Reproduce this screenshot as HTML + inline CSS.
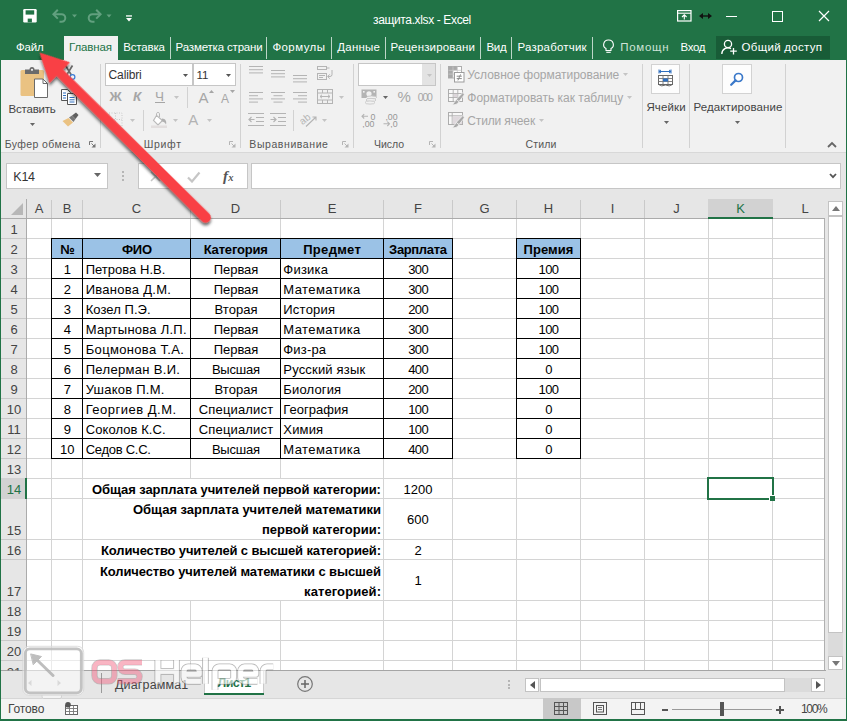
<!DOCTYPE html>
<html><head><meta charset="utf-8"><title>Excel</title>
<style>
html,body{margin:0;padding:0}
body{width:847px;height:721px;overflow:hidden;position:relative;background:#217346;font-family:"Liberation Sans", sans-serif;}
div,span,svg{position:absolute;}
span{white-space:pre;}
</style></head><body>
<div style="left:1px;top:60px;width:844.6px;height:92px;background:#f1f1f1;"></div>
<div style="left:1px;top:152px;width:844.6px;height:1px;background:#d8d8d8;"></div>
<div style="left:1px;top:153px;width:844.6px;height:46px;background:#e6e6e6;"></div>
<div style="left:1px;top:199px;width:844.6px;height:20px;background:#e6e6e6;"></div>
<div style="left:1px;top:219px;width:844.6px;height:452px;background:#e6e6e6;"></div>
<div style="left:1px;top:671px;width:844.6px;height:27px;background:#e6e6e6;"></div>
<div style="left:1px;top:698px;width:844.6px;height:21px;background:#f3f3f3;"></div>
<div style="left:1px;top:698px;width:844.6px;height:1px;background:#d6d6d6;"></div>
<div style="left:27px;top:219px;width:798px;height:452px;background:#fff;"></div>
<div style="left:51px;top:219px;width:1px;height:452px;background:#d4d4d4;"></div>
<div style="left:82px;top:219px;width:1px;height:452px;background:#d4d4d4;"></div>
<div style="left:190px;top:219px;width:1px;height:452px;background:#d4d4d4;"></div>
<div style="left:280px;top:219px;width:1px;height:452px;background:#d4d4d4;"></div>
<div style="left:383px;top:219px;width:1px;height:452px;background:#d4d4d4;"></div>
<div style="left:452px;top:219px;width:1px;height:452px;background:#d4d4d4;"></div>
<div style="left:516px;top:219px;width:1px;height:452px;background:#d4d4d4;"></div>
<div style="left:580px;top:219px;width:1px;height:452px;background:#d4d4d4;"></div>
<div style="left:644px;top:219px;width:1px;height:452px;background:#d4d4d4;"></div>
<div style="left:708px;top:219px;width:1px;height:452px;background:#d4d4d4;"></div>
<div style="left:772px;top:219px;width:1px;height:452px;background:#d4d4d4;"></div>
<div style="left:824px;top:219px;width:1px;height:452px;background:#d4d4d4;"></div>
<div style="left:27px;top:238px;width:798px;height:1px;background:#d4d4d4;"></div>
<div style="left:27px;top:258px;width:798px;height:1px;background:#d4d4d4;"></div>
<div style="left:27px;top:278px;width:798px;height:1px;background:#d4d4d4;"></div>
<div style="left:27px;top:298px;width:798px;height:1px;background:#d4d4d4;"></div>
<div style="left:27px;top:318px;width:798px;height:1px;background:#d4d4d4;"></div>
<div style="left:27px;top:338px;width:798px;height:1px;background:#d4d4d4;"></div>
<div style="left:27px;top:358px;width:798px;height:1px;background:#d4d4d4;"></div>
<div style="left:27px;top:378px;width:798px;height:1px;background:#d4d4d4;"></div>
<div style="left:27px;top:398px;width:798px;height:1px;background:#d4d4d4;"></div>
<div style="left:27px;top:418px;width:798px;height:1px;background:#d4d4d4;"></div>
<div style="left:27px;top:438px;width:798px;height:1px;background:#d4d4d4;"></div>
<div style="left:27px;top:458px;width:798px;height:1px;background:#d4d4d4;"></div>
<div style="left:27px;top:478px;width:798px;height:1px;background:#d4d4d4;"></div>
<div style="left:27px;top:498px;width:798px;height:1px;background:#d4d4d4;"></div>
<div style="left:27px;top:539px;width:798px;height:1px;background:#d4d4d4;"></div>
<div style="left:27px;top:559px;width:798px;height:1px;background:#d4d4d4;"></div>
<div style="left:27px;top:600px;width:798px;height:1px;background:#d4d4d4;"></div>
<div style="left:27px;top:620px;width:798px;height:1px;background:#d4d4d4;"></div>
<div style="left:27px;top:640px;width:798px;height:1px;background:#d4d4d4;"></div>
<div style="left:27px;top:660px;width:798px;height:1px;background:#d4d4d4;"></div>
<div style="left:1px;top:219px;width:25px;height:452px;background:#e6e6e6;"></div>
<div style="left:26px;top:199px;width:1px;height:472px;background:#ababab;"></div>
<div style="left:1px;top:218px;width:824px;height:1px;background:#ababab;"></div>
<div style="left:1px;top:238px;width:25px;height:1px;background:#c9c9c9;"></div>
<div style="left:1px;top:258px;width:25px;height:1px;background:#c9c9c9;"></div>
<div style="left:1px;top:278px;width:25px;height:1px;background:#c9c9c9;"></div>
<div style="left:1px;top:298px;width:25px;height:1px;background:#c9c9c9;"></div>
<div style="left:1px;top:318px;width:25px;height:1px;background:#c9c9c9;"></div>
<div style="left:1px;top:338px;width:25px;height:1px;background:#c9c9c9;"></div>
<div style="left:1px;top:358px;width:25px;height:1px;background:#c9c9c9;"></div>
<div style="left:1px;top:378px;width:25px;height:1px;background:#c9c9c9;"></div>
<div style="left:1px;top:398px;width:25px;height:1px;background:#c9c9c9;"></div>
<div style="left:1px;top:418px;width:25px;height:1px;background:#c9c9c9;"></div>
<div style="left:1px;top:438px;width:25px;height:1px;background:#c9c9c9;"></div>
<div style="left:1px;top:458px;width:25px;height:1px;background:#c9c9c9;"></div>
<div style="left:1px;top:478px;width:25px;height:1px;background:#c9c9c9;"></div>
<div style="left:1px;top:498px;width:25px;height:1px;background:#c9c9c9;"></div>
<div style="left:1px;top:539px;width:25px;height:1px;background:#c9c9c9;"></div>
<div style="left:1px;top:559px;width:25px;height:1px;background:#c9c9c9;"></div>
<div style="left:1px;top:600px;width:25px;height:1px;background:#c9c9c9;"></div>
<div style="left:1px;top:620px;width:25px;height:1px;background:#c9c9c9;"></div>
<div style="left:1px;top:640px;width:25px;height:1px;background:#c9c9c9;"></div>
<div style="left:1px;top:660px;width:25px;height:1px;background:#c9c9c9;"></div>
<div style="left:51px;top:200px;width:1px;height:18px;background:#c9c9c9;"></div>
<div style="left:82px;top:200px;width:1px;height:18px;background:#c9c9c9;"></div>
<div style="left:190px;top:200px;width:1px;height:18px;background:#c9c9c9;"></div>
<div style="left:280px;top:200px;width:1px;height:18px;background:#c9c9c9;"></div>
<div style="left:383px;top:200px;width:1px;height:18px;background:#c9c9c9;"></div>
<div style="left:452px;top:200px;width:1px;height:18px;background:#c9c9c9;"></div>
<div style="left:516px;top:200px;width:1px;height:18px;background:#c9c9c9;"></div>
<div style="left:580px;top:200px;width:1px;height:18px;background:#c9c9c9;"></div>
<div style="left:644px;top:200px;width:1px;height:18px;background:#c9c9c9;"></div>
<div style="left:708px;top:200px;width:1px;height:18px;background:#c9c9c9;"></div>
<div style="left:772px;top:200px;width:1px;height:18px;background:#c9c9c9;"></div>
<div style="left:824px;top:219px;width:1px;height:452px;background:#b0b0b0;"></div>
<div style="left:1px;top:670px;width:825px;height:1px;background:#a5a5a5;"></div>
<div style="left:708px;top:199px;width:65px;height:19px;background:#d2d2d2;"></div>
<div style="left:708px;top:217px;width:65px;height:2px;background:#217346;"></div>
<div style="left:1px;top:478px;width:25px;height:21px;background:#d2d2d2;"></div>
<div style="left:25px;top:478px;width:2px;height:21px;background:#217346;"></div>
<span style="left:34.7px;top:200.0px;font-size:13px;line-height:18px;color:#444;">A</span>
<span style="left:62.7px;top:200.0px;font-size:13px;line-height:18px;color:#444;">B</span>
<span style="left:131.8px;top:200.0px;font-size:13px;line-height:18px;color:#444;">C</span>
<span style="left:230.8px;top:200.0px;font-size:13px;line-height:18px;color:#444;">D</span>
<span style="left:327.7px;top:200.0px;font-size:13px;line-height:18px;color:#444;">E</span>
<span style="left:414.0px;top:200.0px;font-size:13px;line-height:18px;color:#444;">F</span>
<span style="left:479.4px;top:200.0px;font-size:13px;line-height:18px;color:#444;">G</span>
<span style="left:543.8px;top:200.0px;font-size:13px;line-height:18px;color:#444;">H</span>
<span style="left:610.7px;top:200.0px;font-size:13px;line-height:18px;color:#444;">I</span>
<span style="left:673.2px;top:200.0px;font-size:13px;line-height:18px;color:#444;">J</span>
<span style="left:736.2px;top:200.0px;font-size:13px;line-height:18px;color:#217346;">K</span>
<span style="left:801.4px;top:200.0px;font-size:13px;line-height:18px;color:#444;">L</span>
<svg style="left:11px;top:203px;" width="12" height="12" viewBox="0 0 12 12"><path d="M12 0 L12 12 L0 12 Z" fill="#b7b7b7"/></svg>
<span style="left:10.4px;top:220.5px;font-size:13px;line-height:18px;color:#444;">1</span>
<span style="left:10.4px;top:240.5px;font-size:13px;line-height:18px;color:#444;">2</span>
<span style="left:10.4px;top:260.5px;font-size:13px;line-height:18px;color:#444;">3</span>
<span style="left:10.4px;top:280.5px;font-size:13px;line-height:18px;color:#444;">4</span>
<span style="left:10.4px;top:300.5px;font-size:13px;line-height:18px;color:#444;">5</span>
<span style="left:10.4px;top:320.5px;font-size:13px;line-height:18px;color:#444;">6</span>
<span style="left:10.4px;top:340.5px;font-size:13px;line-height:18px;color:#444;">7</span>
<span style="left:10.4px;top:360.5px;font-size:13px;line-height:18px;color:#444;">8</span>
<span style="left:10.4px;top:380.5px;font-size:13px;line-height:18px;color:#444;">9</span>
<span style="left:6.8px;top:400.5px;font-size:13px;line-height:18px;color:#444;">10</span>
<span style="left:7.2px;top:420.5px;font-size:13px;line-height:18px;color:#444;">11</span>
<span style="left:6.8px;top:440.5px;font-size:13px;line-height:18px;color:#444;">12</span>
<span style="left:6.8px;top:460.5px;font-size:13px;line-height:18px;color:#444;">13</span>
<span style="left:6.8px;top:480.5px;font-size:13px;line-height:18px;color:#217346;">14</span>
<span style="left:6.8px;top:521.5px;font-size:13px;line-height:18px;color:#444;">15</span>
<span style="left:6.8px;top:541.5px;font-size:13px;line-height:18px;color:#444;">16</span>
<span style="left:6.8px;top:582.5px;font-size:13px;line-height:18px;color:#444;">17</span>
<span style="left:6.8px;top:602.5px;font-size:13px;line-height:18px;color:#444;">18</span>
<span style="left:6.8px;top:622.5px;font-size:13px;line-height:18px;color:#444;">19</span>
<span style="left:6.8px;top:642.5px;font-size:13px;line-height:18px;color:#444;">20</span>
<span style="left:6.8px;top:663.5px;font-size:13px;line-height:18px;color:#444;clip-path:inset(0 0 11px 0);">21</span>
<div style="left:52px;top:239px;width:401px;height:19px;background:#9bc2e6;"></div>
<div style="left:517px;top:239px;width:64px;height:19px;background:#9bc2e6;"></div>
<div style="left:51px;top:238px;width:402px;height:1px;background:#000;"></div>
<div style="left:516px;top:238px;width:65px;height:1px;background:#000;"></div>
<div style="left:51px;top:258px;width:402px;height:1px;background:#000;"></div>
<div style="left:516px;top:258px;width:65px;height:1px;background:#000;"></div>
<div style="left:51px;top:278px;width:402px;height:1px;background:#000;"></div>
<div style="left:516px;top:278px;width:65px;height:1px;background:#000;"></div>
<div style="left:51px;top:298px;width:402px;height:1px;background:#000;"></div>
<div style="left:516px;top:298px;width:65px;height:1px;background:#000;"></div>
<div style="left:51px;top:318px;width:402px;height:1px;background:#000;"></div>
<div style="left:516px;top:318px;width:65px;height:1px;background:#000;"></div>
<div style="left:51px;top:338px;width:402px;height:1px;background:#000;"></div>
<div style="left:516px;top:338px;width:65px;height:1px;background:#000;"></div>
<div style="left:51px;top:358px;width:402px;height:1px;background:#000;"></div>
<div style="left:516px;top:358px;width:65px;height:1px;background:#000;"></div>
<div style="left:51px;top:378px;width:402px;height:1px;background:#000;"></div>
<div style="left:516px;top:378px;width:65px;height:1px;background:#000;"></div>
<div style="left:51px;top:398px;width:402px;height:1px;background:#000;"></div>
<div style="left:516px;top:398px;width:65px;height:1px;background:#000;"></div>
<div style="left:51px;top:418px;width:402px;height:1px;background:#000;"></div>
<div style="left:516px;top:418px;width:65px;height:1px;background:#000;"></div>
<div style="left:51px;top:438px;width:402px;height:1px;background:#000;"></div>
<div style="left:516px;top:438px;width:65px;height:1px;background:#000;"></div>
<div style="left:51px;top:458px;width:402px;height:1px;background:#000;"></div>
<div style="left:516px;top:458px;width:65px;height:1px;background:#000;"></div>
<div style="left:51px;top:238px;width:1px;height:221px;background:#000;"></div>
<div style="left:82px;top:238px;width:1px;height:221px;background:#000;"></div>
<div style="left:190px;top:238px;width:1px;height:221px;background:#000;"></div>
<div style="left:280px;top:238px;width:1px;height:221px;background:#000;"></div>
<div style="left:383px;top:238px;width:1px;height:221px;background:#000;"></div>
<div style="left:452px;top:238px;width:1px;height:221px;background:#000;"></div>
<div style="left:516px;top:238px;width:1px;height:221px;background:#000;"></div>
<div style="left:580px;top:238px;width:1px;height:221px;background:#000;"></div>
<span style="left:60.2px;top:241.0px;font-size:13px;line-height:18px;color:#000;font-weight:700;letter-spacing:0.3px;">№</span>
<span style="left:121.9px;top:241.0px;font-size:13px;line-height:18px;color:#000;font-weight:700;letter-spacing:-0.19px;">ФИО</span>
<span style="left:203.7px;top:241.0px;font-size:13px;line-height:18px;color:#000;font-weight:700;letter-spacing:-0.17px;">Категория</span>
<span style="left:303.2px;top:241.0px;font-size:13px;line-height:18px;color:#000;font-weight:700;letter-spacing:0.31px;">Предмет</span>
<span style="left:389.1px;top:241.0px;font-size:13px;line-height:18px;color:#000;font-weight:700;letter-spacing:-0.35px;">Зарплата</span>
<span style="left:523.5px;top:241.0px;font-size:13px;line-height:18px;color:#000;font-weight:700;letter-spacing:0.08px;">Премия</span>
<span style="left:63.7px;top:261.0px;font-size:13px;line-height:18px;color:#000;">1</span>
<span style="left:85.7px;top:261.0px;font-size:13px;line-height:18px;color:#000;letter-spacing:0.02px;">Петрова Н.В.</span>
<span style="left:213.8px;top:261.0px;font-size:13px;line-height:18px;color:#000;letter-spacing:-0.07px;">Первая</span>
<span style="left:283.3px;top:261.0px;font-size:13px;line-height:18px;color:#000;letter-spacing:0.24px;">Физика</span>
<span style="left:408.2px;top:261.0px;font-size:13px;line-height:18px;color:#000;letter-spacing:-0.61px;">300</span>
<span style="left:538.6px;top:261.0px;font-size:13px;line-height:18px;color:#000;letter-spacing:-0.61px;">100</span>
<span style="left:63.7px;top:281.0px;font-size:13px;line-height:18px;color:#000;">2</span>
<span style="left:85.7px;top:281.0px;font-size:13px;line-height:18px;color:#000;letter-spacing:0.28px;">Иванова Д.М.</span>
<span style="left:213.8px;top:281.0px;font-size:13px;line-height:18px;color:#000;letter-spacing:-0.07px;">Первая</span>
<span style="left:283.3px;top:281.0px;font-size:13px;line-height:18px;color:#000;letter-spacing:0.42px;">Математика</span>
<span style="left:408.2px;top:281.0px;font-size:13px;line-height:18px;color:#000;letter-spacing:-0.61px;">300</span>
<span style="left:538.6px;top:281.0px;font-size:13px;line-height:18px;color:#000;letter-spacing:-0.61px;">100</span>
<span style="left:63.7px;top:301.0px;font-size:13px;line-height:18px;color:#000;">3</span>
<span style="left:85.7px;top:301.0px;font-size:13px;line-height:18px;color:#000;letter-spacing:0.06px;">Козел П.Э.</span>
<span style="left:214.5px;top:301.0px;font-size:13px;line-height:18px;color:#000;letter-spacing:0.05px;">Вторая</span>
<span style="left:283.3px;top:301.0px;font-size:13px;line-height:18px;color:#000;letter-spacing:0.23px;">История</span>
<span style="left:408.2px;top:301.0px;font-size:13px;line-height:18px;color:#000;letter-spacing:-0.61px;">200</span>
<span style="left:538.6px;top:301.0px;font-size:13px;line-height:18px;color:#000;letter-spacing:-0.61px;">100</span>
<span style="left:63.7px;top:321.0px;font-size:13px;line-height:18px;color:#000;">4</span>
<span style="left:85.7px;top:321.0px;font-size:13px;line-height:18px;color:#000;letter-spacing:0.25px;">Мартынова Л.П.</span>
<span style="left:213.8px;top:321.0px;font-size:13px;line-height:18px;color:#000;letter-spacing:-0.07px;">Первая</span>
<span style="left:283.3px;top:321.0px;font-size:13px;line-height:18px;color:#000;letter-spacing:0.42px;">Математика</span>
<span style="left:408.2px;top:321.0px;font-size:13px;line-height:18px;color:#000;letter-spacing:-0.61px;">300</span>
<span style="left:538.6px;top:321.0px;font-size:13px;line-height:18px;color:#000;letter-spacing:-0.61px;">100</span>
<span style="left:63.7px;top:341.0px;font-size:13px;line-height:18px;color:#000;">5</span>
<span style="left:85.7px;top:341.0px;font-size:13px;line-height:18px;color:#000;letter-spacing:0.34px;">Боцмонова Т.А.</span>
<span style="left:213.8px;top:341.0px;font-size:13px;line-height:18px;color:#000;letter-spacing:-0.07px;">Первая</span>
<span style="left:283.3px;top:341.0px;font-size:13px;line-height:18px;color:#000;letter-spacing:0.18px;">Физ-ра</span>
<span style="left:408.2px;top:341.0px;font-size:13px;line-height:18px;color:#000;letter-spacing:-0.61px;">300</span>
<span style="left:538.6px;top:341.0px;font-size:13px;line-height:18px;color:#000;letter-spacing:-0.61px;">100</span>
<span style="left:63.7px;top:361.0px;font-size:13px;line-height:18px;color:#000;">6</span>
<span style="left:85.7px;top:361.0px;font-size:13px;line-height:18px;color:#000;letter-spacing:0.32px;">Пелерман В.И.</span>
<span style="left:211.9px;top:361.0px;font-size:13px;line-height:18px;color:#000;letter-spacing:-0.2px;">Высшая</span>
<span style="left:283.3px;top:361.0px;font-size:13px;line-height:18px;color:#000;letter-spacing:0.18px;">Русский язык</span>
<span style="left:408.2px;top:361.0px;font-size:13px;line-height:18px;color:#000;letter-spacing:-0.61px;">400</span>
<span style="left:545.2px;top:361.0px;font-size:13px;line-height:18px;color:#000;letter-spacing:-0.61px;">0</span>
<span style="left:63.7px;top:381.0px;font-size:13px;line-height:18px;color:#000;">7</span>
<span style="left:85.7px;top:381.0px;font-size:13px;line-height:18px;color:#000;letter-spacing:0.24px;">Ушаков П.М.</span>
<span style="left:214.5px;top:381.0px;font-size:13px;line-height:18px;color:#000;letter-spacing:0.05px;">Вторая</span>
<span style="left:283.3px;top:381.0px;font-size:13px;line-height:18px;color:#000;letter-spacing:0.16px;">Биология</span>
<span style="left:408.2px;top:381.0px;font-size:13px;line-height:18px;color:#000;letter-spacing:-0.61px;">200</span>
<span style="left:538.6px;top:381.0px;font-size:13px;line-height:18px;color:#000;letter-spacing:-0.61px;">100</span>
<span style="left:63.7px;top:401.0px;font-size:13px;line-height:18px;color:#000;">8</span>
<span style="left:85.7px;top:401.0px;font-size:13px;line-height:18px;color:#000;letter-spacing:0.5px;">Георгиев Д.М.</span>
<span style="left:198.8px;top:401.0px;font-size:13px;line-height:18px;color:#000;letter-spacing:0.16px;">Специалист</span>
<span style="left:283.3px;top:401.0px;font-size:13px;line-height:18px;color:#000;letter-spacing:0.02px;">География</span>
<span style="left:408.2px;top:401.0px;font-size:13px;line-height:18px;color:#000;letter-spacing:-0.61px;">100</span>
<span style="left:545.2px;top:401.0px;font-size:13px;line-height:18px;color:#000;letter-spacing:-0.61px;">0</span>
<span style="left:63.7px;top:421.0px;font-size:13px;line-height:18px;color:#000;">9</span>
<span style="left:85.7px;top:421.0px;font-size:13px;line-height:18px;color:#000;letter-spacing:0.08px;">Соколов К.С.</span>
<span style="left:198.8px;top:421.0px;font-size:13px;line-height:18px;color:#000;letter-spacing:0.16px;">Специалист</span>
<span style="left:283.3px;top:421.0px;font-size:13px;line-height:18px;color:#000;letter-spacing:0.17px;">Химия</span>
<span style="left:408.2px;top:421.0px;font-size:13px;line-height:18px;color:#000;letter-spacing:-0.61px;">100</span>
<span style="left:545.2px;top:421.0px;font-size:13px;line-height:18px;color:#000;letter-spacing:-0.61px;">0</span>
<span style="left:60.1px;top:441.0px;font-size:13px;line-height:18px;color:#000;">10</span>
<span style="left:85.7px;top:441.0px;font-size:13px;line-height:18px;color:#000;letter-spacing:-0.27px;">Седов С.С.</span>
<span style="left:211.9px;top:441.0px;font-size:13px;line-height:18px;color:#000;letter-spacing:-0.2px;">Высшая</span>
<span style="left:283.3px;top:441.0px;font-size:13px;line-height:18px;color:#000;letter-spacing:0.42px;">Математика</span>
<span style="left:408.2px;top:441.0px;font-size:13px;line-height:18px;color:#000;letter-spacing:-0.61px;">400</span>
<span style="left:545.2px;top:441.0px;font-size:13px;line-height:18px;color:#000;letter-spacing:-0.61px;">0</span>
<div style="left:190px;top:479px;width:1px;height:19px;background:#fff;"></div>
<div style="left:280px;top:479px;width:1px;height:19px;background:#fff;"></div>
<div style="left:190px;top:499px;width:1px;height:40px;background:#fff;"></div>
<div style="left:280px;top:499px;width:1px;height:40px;background:#fff;"></div>
<div style="left:190px;top:540px;width:1px;height:19px;background:#fff;"></div>
<div style="left:280px;top:540px;width:1px;height:19px;background:#fff;"></div>
<div style="left:190px;top:560px;width:1px;height:40px;background:#fff;"></div>
<div style="left:280px;top:560px;width:1px;height:40px;background:#fff;"></div>
<span style="left:92.0px;top:480.8px;font-size:13px;line-height:18px;color:#000;font-weight:700;letter-spacing:-0.08px;">Общая зарплата учителей первой категории:</span>
<span style="left:133.0px;top:500.5px;font-size:13px;line-height:18px;color:#000;font-weight:700;letter-spacing:-0.02px;">Общая зарплата учителей математики</span>
<span style="left:262.0px;top:521.0px;font-size:13px;line-height:18px;color:#000;font-weight:700;letter-spacing:-0.01px;">первой категории:</span>
<span style="left:101.0px;top:541.5px;font-size:13px;line-height:18px;color:#000;font-weight:700;letter-spacing:-0.14px;">Количество учителей с высшей категорией:</span>
<span style="left:100.0px;top:563.0px;font-size:13px;line-height:18px;color:#000;font-weight:700;letter-spacing:-0.11px;">Количество учителей математики с высшей</span>
<span style="left:304.1px;top:582.5px;font-size:13px;line-height:18px;color:#000;font-weight:700;letter-spacing:0.09px;">категорией:</span>
<span style="left:403.5px;top:480.8px;font-size:13px;line-height:18px;color:#000;">1200</span>
<span style="left:407.1px;top:510.8px;font-size:13px;line-height:18px;color:#000;">600</span>
<span style="left:414.4px;top:541.5px;font-size:13px;line-height:18px;color:#000;">2</span>
<span style="left:414.4px;top:571.8px;font-size:13px;line-height:18px;color:#000;">1</span>
<div style="left:707px;top:477px;width:67px;height:23px;border:2px solid #217346;box-sizing:border-box;"></div>
<div style="left:769px;top:495px;width:6px;height:6px;background:#fff;"></div>
<div style="left:770px;top:496px;width:5px;height:5px;background:#217346;"></div>
<span style="left:373.1px;top:12.0px;font-size:12px;line-height:16px;color:#fff;letter-spacing:-0.37px;">защита.xlsx - Excel</span>
<svg style="left:23px;top:9px;" width="14" height="14" viewBox="0 0 14 14"><rect x="0.2" y="0.1" width="13.5" height="13.3" rx="1.2" fill="#fff"/><rect x="2.6" y="1.3" width="8.6" height="4.3" fill="#217346"/><rect x="4.7" y="9.6" width="4.2" height="3.8" fill="#217346"/></svg>
<svg style="left:51px;top:8px;" width="27" height="15" viewBox="0 0 27 15"><path d="M3 6.2 H10.5 A3.8 3.8 0 0 1 10.5 13.8 H8.5" fill="none" stroke="#62a07f" stroke-width="2"/><path d="M6.8 1.8 L2.4 6.2 L6.8 10.6" fill="none" stroke="#62a07f" stroke-width="2"/><path d="M21 6.5 h5 l-2.5 3 z" fill="#62a07f"/></svg>
<svg style="left:86px;top:8px;" width="27" height="15" viewBox="0 0 27 15"><path d="M14 6.2 H6.5 A3.8 3.8 0 0 0 6.5 13.8 H8.5" fill="none" stroke="#62a07f" stroke-width="2"/><path d="M10.2 1.8 L14.6 6.2 L10.2 10.6" fill="none" stroke="#62a07f" stroke-width="2"/><path d="M20.5 6.5 h5 l-2.5 3 z" fill="#62a07f"/></svg>
<svg style="left:125.5px;top:14.5px;" width="6" height="7" viewBox="0 0 6 7"><rect x="0" y="0.3" width="6" height="1.3" fill="#fff"/><path d="M0 3 h6 l-3 3.6 z" fill="#fff"/></svg>
<svg style="left:677px;top:10px;" width="15" height="12" viewBox="0 0 15 12"><rect x="0.6" y="0.6" width="13.4" height="10.4" fill="none" stroke="#fff" stroke-width="1.2"/><path d="M0.6 3.2 H14" stroke="#fff" stroke-width="1.1"/><path d="M7.3 9.5 V5 M5 7 L7.3 4.8 L9.6 7" fill="none" stroke="#fff" stroke-width="1.1"/></svg>
<svg style="left:699px;top:11px;" width="13" height="10" viewBox="0 0 13 10"><path d="M2 5 H11" stroke="#111" stroke-width="1.4"/><path d="M0 5 L4 2 V8 Z M13 5 L9 2 V8 Z" fill="#111"/></svg>
<div style="left:726px;top:16px;width:11px;height:1px;background:#fff;"></div>
<div style="left:772px;top:11px;width:11px;height:11px;border:1px solid #fff;box-sizing:border-box;"></div>
<svg style="left:818px;top:10px;" width="12" height="12" viewBox="0 0 12 12"><path d="M1 1 L11 11 M11 1 L1 11" stroke="#fff" stroke-width="1.2" fill="none"/></svg>
<div style="left:64px;top:36px;width:54px;height:24px;background:#f1f1f1;"></div>
<span style="left:16.0px;top:39.4px;font-size:11.5px;line-height:16px;color:#fff;letter-spacing:-0.2px;">Файл</span>
<span style="left:69.0px;top:39.4px;font-size:11.5px;line-height:16px;color:#217346;letter-spacing:-0.14px;">Главная</span>
<span style="left:123.3px;top:39.4px;font-size:11.5px;line-height:16px;color:#fff;letter-spacing:-0.18px;">Вставка</span>
<span style="left:175.6px;top:39.4px;font-size:11.5px;line-height:16px;color:#fff;letter-spacing:-0.17px;">Разметка страни</span>
<span style="left:272.4px;top:39.4px;font-size:11.5px;line-height:16px;color:#fff;letter-spacing:0.42px;">Формулы</span>
<span style="left:337.3px;top:39.4px;font-size:11.5px;line-height:16px;color:#fff;letter-spacing:0.21px;">Данные</span>
<span style="left:390.6px;top:39.4px;font-size:11.5px;line-height:16px;color:#fff;letter-spacing:0.16px;">Рецензировани</span>
<span style="left:486.6px;top:39.4px;font-size:11.5px;line-height:16px;color:#fff;letter-spacing:-0.4px;">Вид</span>
<span style="left:517.6px;top:39.4px;font-size:11.5px;line-height:16px;color:#fff;letter-spacing:0.19px;">Разработчик</span>
<div style="left:170.0px;top:37px;width:1px;height:22px;background:#bdd6c8;"></div>
<div style="left:266.0px;top:37px;width:1px;height:22px;background:#bdd6c8;"></div>
<div style="left:331.0px;top:37px;width:1px;height:22px;background:#bdd6c8;"></div>
<div style="left:385.0px;top:37px;width:1px;height:22px;background:#bdd6c8;"></div>
<div style="left:480.0px;top:37px;width:1px;height:22px;background:#bdd6c8;"></div>
<div style="left:511.0px;top:37px;width:1px;height:22px;background:#bdd6c8;"></div>
<div style="left:591.5px;top:37px;width:1px;height:22px;background:#bdd6c8;"></div>
<svg style="left:602px;top:39px;" width="13" height="15" viewBox="0 0 13 15"><path d="M6.5 1 A4.6 4.6 0 0 1 9 9.6 V11.5 H4 V9.6 A4.6 4.6 0 0 1 6.5 1 Z" fill="none" stroke="#fff" stroke-width="1.1"/><path d="M4.3 13.3 H8.7" stroke="#fff" stroke-width="1.1"/></svg>
<span style="left:620.3px;top:39.4px;font-size:11.5px;line-height:16px;color:#cfe3d7;letter-spacing:0.7px;">Помощн</span>
<span style="left:680.6px;top:39.4px;font-size:11.5px;line-height:16px;color:#fff;letter-spacing:-0.35px;">Вход</span>
<div style="left:716px;top:36px;width:114px;height:23px;background:#185c37;"></div>
<svg style="left:721px;top:39px;" width="17" height="16" viewBox="0 0 17 16"><circle cx="7" cy="5" r="3.6" fill="none" stroke="#fff" stroke-width="1.3"/><path d="M0.8 15 A6.2 6.2 0 0 1 10 9.6" fill="none" stroke="#fff" stroke-width="1.3"/><path d="M12.5 9 V15.5 M9.2 12.2 H15.8" stroke="#fff" stroke-width="1.3"/></svg>
<span style="left:741.6px;top:39.4px;font-size:11.5px;line-height:16px;color:#fff;letter-spacing:0.29px;">Общий доступ</span>
<div style="left:100px;top:64px;width:1px;height:84px;background:#d2d2d2;"></div>
<div style="left:240px;top:64px;width:1px;height:84px;background:#d2d2d2;"></div>
<div style="left:353px;top:64px;width:1px;height:84px;background:#d2d2d2;"></div>
<div style="left:440px;top:64px;width:1px;height:84px;background:#d2d2d2;"></div>
<div style="left:642px;top:64px;width:1px;height:84px;background:#d2d2d2;"></div>
<div style="left:689px;top:64px;width:1px;height:84px;background:#d2d2d2;"></div>
<div style="left:785px;top:64px;width:1px;height:84px;background:#d2d2d2;"></div>
<span style="left:4.8px;top:136.8px;font-size:10.5px;line-height:14px;color:#555;letter-spacing:0.37px;">Буфер обмена</span>
<span style="left:143.7px;top:136.8px;font-size:10.5px;line-height:14px;color:#555;letter-spacing:0.69px;">Шрифт</span>
<span style="left:249.3px;top:136.8px;font-size:10.5px;line-height:14px;color:#555;letter-spacing:0.58px;">Выравнивание</span>
<span style="left:374.0px;top:136.8px;font-size:10.5px;line-height:14px;color:#555;">Число</span>
<span style="left:525.5px;top:136.8px;font-size:10.5px;line-height:14px;color:#555;letter-spacing:0.15px;">Стили</span>
<svg style="left:89px;top:141px;" width="7" height="7" viewBox="0 0 7 7"><path d="M0.5 4 V0.5 H4" fill="none" stroke="#777" stroke-width="1"/><path d="M6.5 2.5 V6.5 H2.5 Z" fill="#777"/><path d="M2.5 2.5 L5.5 5.5" stroke="#777" stroke-width="1"/></svg>
<svg style="left:229px;top:141px;" width="7" height="7" viewBox="0 0 7 7"><path d="M0.5 4 V0.5 H4" fill="none" stroke="#b5b5b5" stroke-width="1"/><path d="M6.5 2.5 V6.5 H2.5 Z" fill="#b5b5b5"/><path d="M2.5 2.5 L5.5 5.5" stroke="#b5b5b5" stroke-width="1"/></svg>
<svg style="left:342px;top:141px;" width="7" height="7" viewBox="0 0 7 7"><path d="M0.5 4 V0.5 H4" fill="none" stroke="#b5b5b5" stroke-width="1"/><path d="M6.5 2.5 V6.5 H2.5 Z" fill="#b5b5b5"/><path d="M2.5 2.5 L5.5 5.5" stroke="#b5b5b5" stroke-width="1"/></svg>
<svg style="left:429px;top:141px;" width="7" height="7" viewBox="0 0 7 7"><path d="M0.5 4 V0.5 H4" fill="none" stroke="#b5b5b5" stroke-width="1"/><path d="M6.5 2.5 V6.5 H2.5 Z" fill="#b5b5b5"/><path d="M2.5 2.5 L5.5 5.5" stroke="#b5b5b5" stroke-width="1"/></svg>
<svg style="left:20px;top:67px;" width="29" height="32" viewBox="0 0 29 32"><rect x="0.5" y="3" width="23.5" height="26" rx="1.5" fill="#eac282"/><path d="M5 2.5 H9.5 A2.5 2.5 0 0 1 14.5 2.5 H19 V7 H5 Z" fill="#6b6b6b"/><circle cx="12" cy="2.8" r="1.1" fill="#f1f1f1"/><path d="M14.5 12 H23 L27.5 16.5 V30.5 H14.5 Z" fill="#fff" stroke="#6b6b6b" stroke-width="1"/><path d="M23 12 V16.5 H27.5" fill="none" stroke="#6b6b6b" stroke-width="1"/></svg>
<span style="left:8.6px;top:100.9px;font-size:11.5px;line-height:16px;color:#444;letter-spacing:-0.22px;">Вставить</span>
<svg style="left:30px;top:123px;" width="5" height="3" viewBox="0 0 5 3"><path d="M0 0 H5 L2.5 3 Z" fill="#666"/></svg>
<svg style="left:62px;top:65px;" width="14" height="16" viewBox="0 0 14 16"><path d="M3.5 0.5 L9.2 9.8 M10.5 0.5 L4.8 9.8" stroke="#6a6a6a" stroke-width="1.7" fill="none"/><circle cx="3.5" cy="12" r="2.4" fill="none" stroke="#3a7bd5" stroke-width="1.2"/><circle cx="10.5" cy="12" r="2.4" fill="none" stroke="#3a7bd5" stroke-width="1.2"/></svg>
<svg style="left:61px;top:89px;" width="17" height="16" viewBox="0 0 17 16"><path d="M0.5 0.5 H6.5 L9.5 3.5 V11.5 H0.5 Z" fill="#fff" stroke="#555" stroke-width="1"/><path d="M6.5 4.5 H12.5 L15.5 7.5 V15.5 H6.5 Z" fill="#fff" stroke="#555" stroke-width="1"/><path d="M2 4 H5 M2 6.5 H5 M2 9 H5 M8.5 8.5 H13.5 M8.5 10.8 H13.5 M8.5 13 H13.5" stroke="#2f6fbf" stroke-width="1"/></svg>
<svg style="left:62px;top:112px;" width="17" height="15" viewBox="0 0 17 15"><path d="M10 3.5 L14 0.5 L16.5 3 L13.5 7 Z" fill="#5f5f5f"/><path d="M7 5.5 L10 3.5 L13.5 7 L11.5 10 Z" fill="#777"/><path d="M6.5 6 L11 10.5 L6 14.5 L0.5 9 Z" fill="#eac282"/></svg>
<div style="left:105px;top:63px;width:88px;height:23px;background:#fff;border:1px solid #c6c6c6;box-sizing:border-box;"></div>
<div style="left:193px;top:63px;width:43px;height:23px;background:#fff;border:1px solid #c6c6c6;box-sizing:border-box;"></div>
<span style="left:108.6px;top:66.8px;font-size:12px;line-height:16px;color:#333;letter-spacing:-0.15px;">Calibri</span>
<span style="left:196.6px;top:66.8px;font-size:11.5px;line-height:16px;color:#333;letter-spacing:-0.18px;">11</span>
<svg style="left:183px;top:73.5px;" width="5" height="3" viewBox="0 0 5 3"><path d="M0 0 H5 L2.5 3 Z" fill="#555"/></svg>
<svg style="left:226px;top:73.5px;" width="5" height="3" viewBox="0 0 5 3"><path d="M0 0 H5 L2.5 3 Z" fill="#555"/></svg>
<span style="left:109.5px;top:88.6px;font-size:13.5px;line-height:16px;color:#a6a6a6;font-weight:700;letter-spacing:0.8px;">Ж</span>
<span style="left:133.0px;top:88.6px;font-size:13.5px;line-height:16px;color:#a6a6a6;font-weight:700;font-style:italic;letter-spacing:0.19px;">К</span>
<span style="left:155.0px;top:88.6px;font-size:13.5px;line-height:16px;color:#a6a6a6;letter-spacing:1.0px;">Ч</span>
<div style="left:155px;top:102px;width:10px;height:1px;background:#a6a6a6;"></div>
<svg style="left:174px;top:96px;" width="5" height="3" viewBox="0 0 5 3"><path d="M0 0 H5 L2.5 3 Z" fill="#c4c4c4"/></svg>
<div style="left:187px;top:87px;width:1px;height:21px;background:#d2d2d2;"></div>
<span style="left:198.6px;top:88.8px;font-size:15px;line-height:18px;color:#a6a6a6;letter-spacing:1.48px;">A</span>
<svg style="left:209px;top:90px;" width="5" height="3" viewBox="0 0 5 3"><path d="M0 3 H5 L2.5 0 Z" fill="#a6a6a6"/></svg>
<span style="left:221.0px;top:90.6px;font-size:12px;line-height:16px;color:#a6a6a6;letter-spacing:0.98px;">A</span>
<svg style="left:229.5px;top:90px;" width="5" height="3" viewBox="0 0 5 3"><path d="M0 0 H5 L2.5 3 Z" fill="#a6a6a6"/></svg>
<svg style="left:108px;top:112px;" width="15" height="15" viewBox="0 0 15 15"><path d="M1 1 H14 V14 H1 Z M1 7.5 H14 M7.5 1 V14" fill="none" stroke="#c9c9c9" stroke-width="1" stroke-dasharray="1 1.5"/></svg>
<svg style="left:130px;top:119px;" width="5" height="3" viewBox="0 0 5 3"><path d="M0 0 H5 L2.5 3 Z" fill="#c4c4c4"/></svg>
<div style="left:143px;top:110px;width:1px;height:21px;background:#d2d2d2;"></div>
<svg style="left:151px;top:111px;" width="17" height="17" viewBox="0 0 17 17"><path d="M5.5 4.5 L11.5 9.5 L7 14 L2.5 9.5 Z" fill="#fff" stroke="#b9b9b9" stroke-width="1.1"/><path d="M5.5 6 V2.5 A1.6 1.6 0 0 1 8.5 2.5 V6" fill="none" stroke="#b9b9b9" stroke-width="1"/><path d="M11 7.5 C14.5 7.5 16 10.5 15 13.5 C14 11.5 12.8 10.6 10.5 10.2 Z" fill="#b0b0b0"/><rect x="0" y="14.5" width="16" height="2.5" fill="#e2dede"/></svg>
<svg style="left:173px;top:119px;" width="5" height="3" viewBox="0 0 5 3"><path d="M0 0 H5 L2.5 3 Z" fill="#c4c4c4"/></svg>
<span style="left:188.3px;top:110.5px;font-size:15px;line-height:18px;color:#b3b3b3;letter-spacing:-0.02px;">A</span>
<svg style="left:207px;top:119px;" width="5" height="3" viewBox="0 0 5 3"><path d="M0 0 H5 L2.5 3 Z" fill="#c4c4c4"/></svg>
<svg style="left:249px;top:65.5px;" width="14" height="10" viewBox="0 0 14 10"><rect x="0" y="0.0" width="14" height="1" fill="#b4b4b4"/><rect x="0" y="3.2" width="14" height="1" fill="#b4b4b4"/><rect x="0" y="6.4" width="14" height="1" fill="#b4b4b4"/></svg>
<svg style="left:271px;top:69.5px;" width="14" height="10" viewBox="0 0 14 10"><rect x="0" y="0.0" width="14" height="1" fill="#b4b4b4"/><rect x="0" y="3.2" width="14" height="1" fill="#b4b4b4"/><rect x="0" y="6.4" width="14" height="1" fill="#b4b4b4"/></svg>
<svg style="left:293px;top:75px;" width="14" height="10" viewBox="0 0 14 10"><rect x="0" y="0.0" width="14" height="1" fill="#b4b4b4"/><rect x="0" y="3.2" width="14" height="1" fill="#b4b4b4"/><rect x="0" y="6.4" width="14" height="1" fill="#b4b4b4"/></svg>
<svg style="left:317px;top:65px;" width="17" height="16" viewBox="0 0 17 16"><rect x="0.5" y="1.5" width="9" height="3" fill="none" stroke="#b4b4b4" stroke-width="1"/><path d="M9.5 3 H12.5" stroke="#b4b4b4" stroke-width="1"/><rect x="0.5" y="8.5" width="9" height="6" fill="none" stroke="#b4b4b4" stroke-width="1"/><path d="M2 10.5 H8 M2 12.5 H6" stroke="#b4b4b4" stroke-width="1"/><path d="M15 5 V9.5 A2 2 0 0 1 13 11.5 H11 M12.8 9.3 L10.6 11.5 L12.8 13.7" fill="none" stroke="#b4b4b4" stroke-width="1"/></svg>
<svg style="left:249px;top:91.5px;" width="14" height="13" viewBox="0 0 14 13"><rect x="0" y="0.0" width="14" height="1" fill="#b4b4b4"/><rect x="0" y="3.2" width="9" height="1" fill="#b4b4b4"/><rect x="0" y="6.4" width="14" height="1" fill="#b4b4b4"/><rect x="0" y="9.6" width="9" height="1" fill="#b4b4b4"/></svg>
<svg style="left:271px;top:91.5px;" width="14" height="13" viewBox="0 0 14 13"><rect x="0.0" y="0.0" width="14" height="1" fill="#b4b4b4"/><rect x="2.5" y="3.2" width="9" height="1" fill="#b4b4b4"/><rect x="0.0" y="6.4" width="14" height="1" fill="#b4b4b4"/><rect x="2.5" y="9.6" width="9" height="1" fill="#b4b4b4"/></svg>
<svg style="left:293px;top:91.5px;" width="14" height="13" viewBox="0 0 14 13"><rect x="0" y="0.0" width="14" height="1" fill="#b4b4b4"/><rect x="5" y="3.2" width="9" height="1" fill="#b4b4b4"/><rect x="0" y="6.4" width="14" height="1" fill="#b4b4b4"/><rect x="5" y="9.6" width="9" height="1" fill="#b4b4b4"/></svg>
<svg style="left:317px;top:89px;" width="16" height="15" viewBox="0 0 16 15"><rect x="0.5" y="0.5" width="15" height="14" fill="none" stroke="#b4b4b4" stroke-width="1"/><path d="M0.5 4 H15.5 M0.5 11 H15.5 M5.5 0.5 V4 M10.5 0.5 V4 M5.5 11 V14.5 M10.5 11 V14.5" stroke="#b4b4b4" stroke-width="1" fill="none"/><path d="M3 7.5 H13 M5 5.8 L3 7.5 L5 9.2 M11 5.8 L13 7.5 L11 9.2" stroke="#b4b4b4" stroke-width="1" fill="none"/></svg>
<svg style="left:339px;top:96px;" width="5" height="3" viewBox="0 0 5 3"><path d="M0 0 H5 L2.5 3 Z" fill="#c4c4c4"/></svg>
<svg style="left:248px;top:113px;" width="16" height="13" viewBox="0 0 16 13"><path d="M0 0.5 H16 M8 4.5 H16 M8 8.5 H16 M0 12.5 H16" stroke="#b4b4b4" stroke-width="1"/><path d="M6.5 6.5 H1 M3.5 4 L1 6.5 L3.5 9" stroke="#b4b4b4" stroke-width="1.2" fill="none"/></svg>
<svg style="left:270px;top:113px;" width="16" height="13" viewBox="0 0 16 13"><path d="M0 0.5 H16 M8 4.5 H16 M8 8.5 H16 M0 12.5 H16" stroke="#b4b4b4" stroke-width="1"/><path d="M0.5 6.5 H6 M3.5 4 L6 6.5 L3.5 9" stroke="#b4b4b4" stroke-width="1.2" fill="none"/></svg>
<div style="left:293px;top:110px;width:1px;height:21px;background:#d2d2d2;"></div>
<svg style="left:300px;top:111px;" width="19" height="17" viewBox="0 0 19 17"><text x="0" y="11" font-family="Liberation Sans" font-size="10" fill="#b4b4b4" transform="rotate(-38 6 9)">ab</text><path d="M6 15.5 L16 6 M12.5 6 H16 V9.5" stroke="#b4b4b4" stroke-width="1.1" fill="none"/></svg>
<svg style="left:321.5px;top:119px;" width="5" height="3" viewBox="0 0 5 3"><path d="M0 0 H5 L2.5 3 Z" fill="#c4c4c4"/></svg>
<div style="left:358px;top:63px;width:78px;height:23px;background:#fff;border:1px solid #c6c6c6;box-sizing:border-box;"></div>
<div style="left:422px;top:64px;width:13px;height:21px;background:#e3e3e3;"></div>
<svg style="left:426.5px;top:73.5px;" width="5" height="3" viewBox="0 0 5 3"><path d="M0 0 H5 L2.5 3 Z" fill="#c4c4c4"/></svg>
<svg style="left:361px;top:89px;" width="17" height="16" viewBox="0 0 17 16"><rect x="0.5" y="0.5" width="15" height="8.5" fill="#b4b4b4"/><circle cx="8" cy="4.8" r="2.6" fill="#f1f1f1"/><rect x="2" y="2" width="1.6" height="1.6" fill="#f1f1f1"/><rect x="12.4" y="2" width="1.6" height="1.6" fill="#f1f1f1"/><ellipse cx="10.5" cy="8.5" rx="5" ry="1.6" fill="#f1f1f1" stroke="#c8c8c8" stroke-width="0.9"/><ellipse cx="10" cy="11" rx="5" ry="1.6" fill="#f1f1f1" stroke="#c8c8c8" stroke-width="0.9"/><ellipse cx="9" cy="13.5" rx="5" ry="1.6" fill="#f1f1f1" stroke="#c8c8c8" stroke-width="0.9"/></svg>
<svg style="left:383px;top:96px;" width="5" height="3" viewBox="0 0 5 3"><path d="M0 0 H5 L2.5 3 Z" fill="#666"/></svg>
<span style="left:397.5px;top:88.0px;font-size:15px;line-height:18px;color:#a6a6a6;letter-spacing:-0.84px;">%</span>
<span style="left:417.8px;top:90.8px;font-size:10.5px;line-height:12px;color:#a6a6a6;letter-spacing:-1.18px;">000</span>
<svg style="left:361px;top:112px;" width="18" height="16" viewBox="0 0 18 16"><path d="M1 4.3 H7 M3.2 2.1 L1 4.3 L3.2 6.5" stroke="#b4b4b4" stroke-width="1.1" fill="none"/><text x="9.6" y="7.6" font-family="Liberation Sans" font-size="8.8" fill="#969696">0</text><text x="1.2" y="15" font-family="Liberation Sans" font-size="8.8" fill="#969696">,00</text></svg>
<svg style="left:383px;top:112px;" width="18" height="16" viewBox="0 0 18 16"><text x="2.4" y="7.6" font-family="Liberation Sans" font-size="8.8" fill="#969696">,00</text><path d="M0.5 11.8 H6.5 M4.3 9.6 L6.5 11.8 L4.3 14" stroke="#b4b4b4" stroke-width="1.1" fill="none"/><text x="7.2" y="15" font-family="Liberation Sans" font-size="8.8" fill="#969696">,0</text></svg>
<svg style="left:448px;top:66px;" width="17" height="17" viewBox="0 0 17 17"><rect x="0.5" y="0.5" width="13" height="11.5" fill="#fff" stroke="#adadad" stroke-width="1"/><rect x="0.5" y="0.5" width="4.5" height="11.5" fill="#a9a9a9"/><rect x="5" y="0.5" width="4.3" height="3.8" fill="#a9a9a9"/><path d="M0.5 4.3 H13.5 M0.5 8.1 H13.5 M5 0.5 V12 M9.3 0.5 V12" stroke="#c9c9c9" stroke-width="0.8"/><rect x="6.5" y="6.5" width="9.5" height="9.5" fill="#fff" stroke="#9c9c9c" stroke-width="1"/><path d="M8.7 10.2 H13.8 M8.7 12.6 H13.8 M12.6 8.4 L9.9 14.4" stroke="#8a8a8a" stroke-width="1"/></svg>
<svg style="left:448px;top:89px;" width="17" height="17" viewBox="0 0 17 17"><rect x="0.5" y="0.5" width="14" height="12" fill="#f8f8f8" stroke="#adadad" stroke-width="1"/><path d="M0.5 4.5 H14.5 M0.5 8.5 H14.5 M5.2 0.5 V12.5 M9.8 0.5 V12.5" stroke="#adadad" stroke-width="0.9"/><rect x="5.6" y="4.9" width="3.8" height="3.2" fill="#dcd6da"/><path d="M15.2 3.2 L16.3 5.8 L11 12.6 L8.2 10.4 Z" fill="#a9a9a9" stroke="#f1f1f1" stroke-width="0.8"/><path d="M8.2 10.6 L10.9 12.7 C9.6 15.6 6.8 16 3.8 15.8 C6.2 14.6 6.6 12.4 8.2 10.6 Z" fill="#a9a9a9" stroke="#f1f1f1" stroke-width="0.8"/></svg>
<svg style="left:448px;top:112px;" width="17" height="17" viewBox="0 0 17 17"><rect x="0.5" y="0.5" width="14" height="12" fill="#f8f8f8" stroke="#adadad" stroke-width="1"/><path d="M0.5 3.8 H14.5 M4.2 0.5 V12.5" stroke="#adadad" stroke-width="0.9"/><rect x="4.7" y="4.3" width="9.4" height="7.8" fill="#dfd9dd"/><path d="M15.2 3.2 L16.3 5.8 L11 12.6 L8.2 10.4 Z" fill="#a9a9a9" stroke="#f1f1f1" stroke-width="0.8"/><path d="M8.2 10.6 L10.9 12.7 C9.6 15.6 6.8 16 3.8 15.8 C6.2 14.6 6.6 12.4 8.2 10.6 Z" fill="#a9a9a9" stroke="#f1f1f1" stroke-width="0.8"/></svg>
<span style="left:467.3px;top:66.8px;font-size:12px;line-height:16px;color:#a6a6a6;letter-spacing:-0.03px;">Условное форматирование</span>
<span style="left:467.3px;top:89.8px;font-size:12px;line-height:16px;color:#a6a6a6;letter-spacing:-0.01px;">Форматировать как таблицу</span>
<span style="left:467.3px;top:112.9px;font-size:12px;line-height:16px;color:#a6a6a6;letter-spacing:-0.14px;">Стили ячеек</span>
<svg style="left:622.5px;top:73px;" width="5" height="3" viewBox="0 0 5 3"><path d="M0 0 H5 L2.5 3 Z" fill="#c4c4c4"/></svg>
<svg style="left:626.5px;top:96px;" width="5" height="3" viewBox="0 0 5 3"><path d="M0 0 H5 L2.5 3 Z" fill="#c4c4c4"/></svg>
<svg style="left:538.5px;top:119px;" width="5" height="3" viewBox="0 0 5 3"><path d="M0 0 H5 L2.5 3 Z" fill="#c4c4c4"/></svg>
<div style="left:651px;top:64px;width:29px;height:30px;background:#fdfdfd;border:1px solid #d2d2d2;box-sizing:border-box;"></div>
<svg style="left:657px;top:69px;" width="17" height="18" viewBox="0 0 17 18"><path d="M2 2.5 H14 M2 0.5 V4.5 M14 0.5 V4.5 M4 1 L2 2.5 L4 4 M12 1 L14 2.5 L12 4" stroke="#2f6fbf" stroke-width="1" fill="none"/><rect x="1.5" y="6.5" width="14" height="9" fill="#fff" stroke="#666" stroke-width="1"/><path d="M1.5 9.5 H15.5 M1.5 12.5 H15.5 M6 6.5 V15.5 M11 6.5 V15.5" stroke="#777" stroke-width="0.9"/><rect x="6" y="9.5" width="5" height="3" fill="#2f6fbf"/><path d="M1.5 15.5 Q4.5 18 8.5 16 Q12.5 18 15.5 15.5" stroke="#666" stroke-width="1" fill="none"/></svg>
<span style="left:646.4px;top:99.2px;font-size:11.5px;line-height:16px;color:#444;letter-spacing:0.12px;">Ячейки</span>
<svg style="left:664px;top:121px;" width="5" height="3" viewBox="0 0 5 3"><path d="M0 0 H5 L2.5 3 Z" fill="#666"/></svg>
<div style="left:722px;top:64px;width:30px;height:30px;background:#fdfdfd;border:1px solid #d2d2d2;box-sizing:border-box;"></div>
<svg style="left:730px;top:72px;" width="14" height="14" viewBox="0 0 14 14"><circle cx="8.5" cy="5.5" r="4" fill="#fff" stroke="#3a78c9" stroke-width="1.7"/><path d="M5.6 8.4 L1.2 12.8" stroke="#3a78c9" stroke-width="2.2" stroke-linecap="round"/></svg>
<span style="left:693.5px;top:99.2px;font-size:11.5px;line-height:16px;color:#444;letter-spacing:0.1px;">Редактирование</span>
<svg style="left:734.5px;top:121px;" width="5" height="3" viewBox="0 0 5 3"><path d="M0 0 H5 L2.5 3 Z" fill="#666"/></svg>
<svg style="left:827px;top:140.5px;" width="10" height="7" viewBox="0 0 10 7"><path d="M1 6 L5 2 L9 6" fill="none" stroke="#666" stroke-width="1.8"/></svg>
<div style="left:6px;top:163px;width:102px;height:25.5px;background:#fff;border:1px solid #c6c6c6;box-sizing:border-box;"></div>
<span style="left:13.3px;top:169.0px;font-size:12.5px;line-height:16px;color:#333;letter-spacing:-0.25px;">K14</span>
<svg style="left:94px;top:173px;" width="7" height="4" viewBox="0 0 7 4"><path d="M0 0 H7 L3.5 4 Z" fill="#666"/></svg>
<div style="left:122px;top:171.2px;width:2px;height:2px;background:#b5b5b5;"></div>
<div style="left:122px;top:175.3px;width:2px;height:2px;background:#b5b5b5;"></div>
<div style="left:122px;top:179.4px;width:2px;height:2px;background:#b5b5b5;"></div>
<div style="left:138px;top:163px;width:110px;height:25.5px;background:#fff;border:1px solid #c6c6c6;box-sizing:border-box;"></div>
<svg style="left:150px;top:171px;" width="11" height="11" viewBox="0 0 11 11"><path d="M1 1 L10 10 M10 1 L1 10" stroke="#c6c6c6" stroke-width="1.6" fill="none"/></svg>
<svg style="left:187px;top:170.5px;" width="14" height="12" viewBox="0 0 14 12"><path d="M1 6.5 L5 10.5 L12.5 1.5" stroke="#c6c6c6" stroke-width="2.2" fill="none"/></svg>
<span style="left:223px;top:167px;font-weight:bold;font-family:'Liberation Serif',serif;font-style:italic;font-size:15px;line-height:18px;color:#555;">f</span>
<span style="left:228.3px;top:170.8px;font-weight:bold;font-family:'Liberation Serif',serif;font-style:italic;font-size:10.5px;line-height:14px;color:#555;">x</span>
<div style="left:251px;top:163px;width:590px;height:25.5px;background:#fff;border:1px solid #c6c6c6;box-sizing:border-box;"></div>
<svg style="left:829px;top:172.5px;" width="8" height="6" viewBox="0 0 8 6"><path d="M1 1 L4 4.2 L7 1" fill="none" stroke="#555" stroke-width="1.8"/></svg>
<div style="left:828px;top:201px;width:15px;height:15px;background:#fff;border:1px solid #c3c3c3;box-sizing:border-box;"></div>
<svg style="left:831.5px;top:206px;" width="8" height="5" viewBox="0 0 8 5"><path d="M0 5 H8 L4 0 Z" fill="#777"/></svg>
<div style="left:828px;top:216px;width:15px;height:417px;background:#fff;border:1px solid #c3c3c3;box-sizing:border-box;"></div>
<div style="left:828px;top:633px;width:15px;height:23px;background:#dbdbdb;"></div>
<div style="left:828px;top:656px;width:15px;height:14px;background:#fff;border:1px solid #c3c3c3;box-sizing:border-box;"></div>
<svg style="left:831.5px;top:661px;" width="8" height="5" viewBox="0 0 8 5"><path d="M0 0 H8 L4 5 Z" fill="#777"/></svg>
<div style="left:508px;top:680px;width:2px;height:2px;background:#b5b5b5;"></div>
<div style="left:508px;top:683.5px;width:2px;height:2px;background:#b5b5b5;"></div>
<div style="left:508px;top:687px;width:2px;height:2px;background:#b5b5b5;"></div>
<div style="left:525px;top:678px;width:14px;height:14px;background:#fff;border:1px solid #c3c3c3;box-sizing:border-box;"></div>
<svg style="left:529.5px;top:681px;" width="5" height="8" viewBox="0 0 5 8"><path d="M5 0 V8 L0 4 Z" fill="#555"/></svg>
<div style="left:540px;top:678px;width:245px;height:14px;background:#fff;border:1px solid #c3c3c3;box-sizing:border-box;"></div>
<div style="left:785px;top:678px;width:26px;height:14px;background:#dbdbdb;"></div>
<div style="left:811px;top:678px;width:14px;height:14px;background:#fff;border:1px solid #c3c3c3;box-sizing:border-box;"></div>
<svg style="left:816px;top:681px;" width="5" height="8" viewBox="0 0 5 8"><path d="M0 0 V8 L5 4 Z" fill="#555"/></svg>
<div style="left:101px;top:673px;width:1px;height:20px;background:#9a9a9a;"></div>
<span style="left:115.0px;top:676.6px;font-size:12.5px;line-height:16px;color:#444;letter-spacing:0.15px;">Диаграмма1</span>
<div style="left:204px;top:671px;width:60px;height:22px;background:#fff;"></div>
<div style="left:204px;top:693px;width:60px;height:2px;background:#217346;"></div>
<div style="left:204px;top:671px;width:1px;height:22px;background:#c9c9c9;"></div>
<div style="left:263px;top:671px;width:1px;height:22px;background:#c9c9c9;"></div>
<span style="left:217.6px;top:675.3px;font-size:12.5px;line-height:16px;color:#217346;font-weight:700;letter-spacing:-0.7px;">Лист1</span>
<svg style="left:296px;top:675px;" width="18" height="18" viewBox="0 0 18 18"><circle cx="9" cy="9" r="7.3" fill="none" stroke="#777" stroke-width="1.2"/><path d="M9 5 V13 M5 9 H13" stroke="#666" stroke-width="1.5"/></svg>
<span style="left:8.0px;top:701.0px;font-size:12px;line-height:16px;color:#444;letter-spacing:-0.14px;">Готово</span>
<svg style="left:65px;top:702px;" width="13" height="13" viewBox="0 0 13 13"><rect x="0.5" y="3.5" width="12" height="9" fill="#fff" stroke="#666" stroke-width="1"/><path d="M0.5 6.5 H12.5 M0.5 9.5 H12.5 M4.5 3.5 V12.5 M8.5 3.5 V12.5" stroke="#777" stroke-width="0.9"/><circle cx="3" cy="2.8" r="2.8" fill="#555"/></svg>
<div style="left:543px;top:698px;width:38px;height:21px;background:#c8c8c8;"></div>
<svg style="left:554px;top:702px;" width="14" height="13" viewBox="0 0 14 13"><rect x="0.5" y="0.5" width="13" height="12" fill="none" stroke="#555" stroke-width="1"/><path d="M0.5 4.5 H13.5 M0.5 8.5 H13.5 M5 0.5 V12.5 M9.5 0.5 V12.5" stroke="#555" stroke-width="1"/></svg>
<svg style="left:593px;top:702px;" width="14" height="13" viewBox="0 0 14 13"><rect x="0.5" y="0.5" width="13" height="12" fill="none" stroke="#555" stroke-width="1"/><rect x="3.5" y="3.5" width="7" height="6.5" fill="none" stroke="#555" stroke-width="1"/><path d="M5 5.5 H9 M5 7.5 H9" stroke="#555" stroke-width="0.8"/></svg>
<svg style="left:631px;top:702px;" width="14" height="13" viewBox="0 0 14 13"><rect x="0.5" y="0.5" width="13" height="12" fill="none" stroke="#555" stroke-width="1"/><path d="M4.5 0.5 V7.5 H9.5 V0.5 M0.5 7.5 H13.5" stroke="#555" stroke-width="1" fill="none"/></svg>
<div style="left:662px;top:709px;width:6px;height:2px;background:#555;"></div>
<div style="left:672px;top:709px;width:100px;height:1px;background:#9a9a9a;"></div>
<div style="left:720px;top:702px;width:4px;height:14px;background:#555;"></div>
<div style="left:776px;top:709px;width:8px;height:2px;background:#555;"></div>
<div style="left:779px;top:706px;width:2px;height:8px;background:#555;"></div>
<span style="left:801.0px;top:701.0px;font-size:12px;line-height:16px;color:#444;letter-spacing:-1.3px;">100%</span>
<svg style="left:0px;top:640px;" width="300" height="70" viewBox="0 640 300 70">
<defs>
 <mask id="mos" maskUnits="userSpaceOnUse" x="0" y="640" width="300" height="70"><rect x="0" y="640" width="300" height="70" fill="#fff"/><g fill="none" stroke="#000" stroke-width="4.6" stroke-linejoin="round"><rect x="94.5" y="662.4" width="19.8" height="18.9" rx="5.6"/><path d="M142 662.4 H125 a4.7 4.7 0 0 0 0 9.4 H134.8 a4.75 4.75 0 0 1 0 9.5 H117.6"/></g></mask>
 <mask id="mhe" maskUnits="userSpaceOnUse" x="0" y="640" width="300" height="70"><rect x="0" y="640" width="300" height="70" fill="#fff"/><g fill="none" stroke="#000" stroke-width="4.6" stroke-linejoin="round"><path d="M157.9 659.9 V683.8 M176.5 659.9 V683.8 M157.9 671.5 H176.5"/><path d="M184 674.2 H199.2 V671 a4.1 4.1 0 0 0 -4.1 -4.1 H188.1 a4.1 4.1 0 0 0 -4.1 4.1 V677.2 a4.1 4.1 0 0 0 4.1 4.1 H200.8"/><path d="M205.4 657.8 V683.8"/><path d="M215 689.8 V671 a4.1 4.1 0 0 1 4.1 -4.1 H229.6 a4.1 4.1 0 0 1 4.1 4.1 V677.2 a4.1 4.1 0 0 1 -4.1 4.1 H215"/><path d="M240.6 674.2 H255.8 V671 a4.1 4.1 0 0 0 -4.1 -4.1 H244.7 a4.1 4.1 0 0 0 -4.1 4.1 V677.2 a4.1 4.1 0 0 0 4.1 4.1 H257.4"/><path d="M263 683.8 V671 a4.1 4.1 0 0 1 4.1 -4.1 H273.2"/></g></mask>
</defs>
<g opacity="0.55">
 <rect x="22.5" y="646" width="61.5" height="49.5" rx="6" fill="#fff"/>
 <rect x="41.5" y="694" width="20.5" height="5" rx="2" fill="#fff"/>
</g>
<rect x="22.8" y="646.3" width="60.9" height="48.9" rx="6" fill="none" stroke="#bdbdbd" stroke-width="0.7" opacity=".7"/>
<rect x="25.3" y="648.8" width="56" height="44" rx="4.5" fill="none" stroke="#b9b9b9" stroke-width="2.8" opacity="0.85"/>
<path d="M42 695.5 V697 a1.5 1.5 0 0 0 1.5 1.5 H60 a1.5 1.5 0 0 0 1.5 -1.5 V695.5" stroke="#bdbdbd" stroke-width="0.8" fill="none" opacity=".8"/>
<g opacity="0.75" stroke="#a9a9a9" fill="none" stroke-linecap="round" stroke-linejoin="round">
 <path d="M53 675.5 L34 657" stroke-width="3"/>
 <path d="M31 654 L41.5 656.5 L33.5 664.5 Z" fill="#a9a9a9" stroke-width="1"/>
</g>
<path d="M31.5 680 V686 L28 683 Z M57.5 680 V686 L61 683 Z" fill="#d2d2d2" opacity=".8"/>
<g fill="none" stroke-linecap="butt" stroke-linejoin="round">
 <g opacity="0.38" stroke="#808080" stroke-width="6.4" mask="url(#mos)"><rect x="94.5" y="662.4" width="19.8" height="18.9" rx="5.6"/><path d="M142 662.4 H125 a4.7 4.7 0 0 0 0 9.4 H134.8 a4.75 4.75 0 0 1 0 9.5 H117.6"/></g>
 <g opacity="0.46" stroke="#f25f7e" stroke-width="5"><rect x="94.5" y="662.4" width="19.8" height="18.9" rx="5.6"/><path d="M142 662.4 H125 a4.7 4.7 0 0 0 0 9.4 H134.8 a4.75 4.75 0 0 1 0 9.5 H117.6"/></g>
 <g opacity="0.55" stroke="#7a7a7a" stroke-width="6.8" mask="url(#mhe)"><path d="M157.9 659.9 V683.8 M176.5 659.9 V683.8 M157.9 671.5 H176.5"/><path d="M184 674.2 H199.2 V671 a4.1 4.1 0 0 0 -4.1 -4.1 H188.1 a4.1 4.1 0 0 0 -4.1 4.1 V677.2 a4.1 4.1 0 0 0 4.1 4.1 H200.8"/><path d="M205.4 657.8 V683.8"/><path d="M215 689.8 V671 a4.1 4.1 0 0 1 4.1 -4.1 H229.6 a4.1 4.1 0 0 1 4.1 4.1 V677.2 a4.1 4.1 0 0 1 -4.1 4.1 H215"/><path d="M240.6 674.2 H255.8 V671 a4.1 4.1 0 0 0 -4.1 -4.1 H244.7 a4.1 4.1 0 0 0 -4.1 4.1 V677.2 a4.1 4.1 0 0 0 4.1 4.1 H257.4"/><path d="M263 683.8 V671 a4.1 4.1 0 0 1 4.1 -4.1 H273.2"/></g>
 <g opacity="0.62" stroke="#fff" stroke-width="5.4"><path d="M157.9 659.9 V683.8 M176.5 659.9 V683.8 M157.9 671.5 H176.5"/><path d="M184 674.2 H199.2 V671 a4.1 4.1 0 0 0 -4.1 -4.1 H188.1 a4.1 4.1 0 0 0 -4.1 4.1 V677.2 a4.1 4.1 0 0 0 4.1 4.1 H200.8"/><path d="M205.4 657.8 V683.8"/><path d="M215 689.8 V671 a4.1 4.1 0 0 1 4.1 -4.1 H229.6 a4.1 4.1 0 0 1 4.1 4.1 V677.2 a4.1 4.1 0 0 1 -4.1 4.1 H215"/><path d="M240.6 674.2 H255.8 V671 a4.1 4.1 0 0 0 -4.1 -4.1 H244.7 a4.1 4.1 0 0 0 -4.1 4.1 V677.2 a4.1 4.1 0 0 0 4.1 4.1 H257.4"/><path d="M263 683.8 V671 a4.1 4.1 0 0 1 4.1 -4.1 H273.2"/></g>
</g>
</svg>
<svg style="left:0px;top:30px;" width="260" height="220" viewBox="0 30 260 220"><defs><filter id="ash" x="-20%" y="-100%" width="140%" height="300%"><feDropShadow dx="2.0" dy="2.0" stdDeviation="1.6" flood-color="#000" flood-opacity="0.6"/></filter></defs><g transform="translate(39.5 52.5) rotate(44.77)" filter="url(#ash)"><path d="M0 0 L28.6 -14.4 L28.6 -4.6 L234.0 -5.3 A5.3 5.3 0 0 1 234.0 5.3 L28.6 4.6 L28.6 14.4 Z" fill="#f94144"/></g></svg>
</body></html>
